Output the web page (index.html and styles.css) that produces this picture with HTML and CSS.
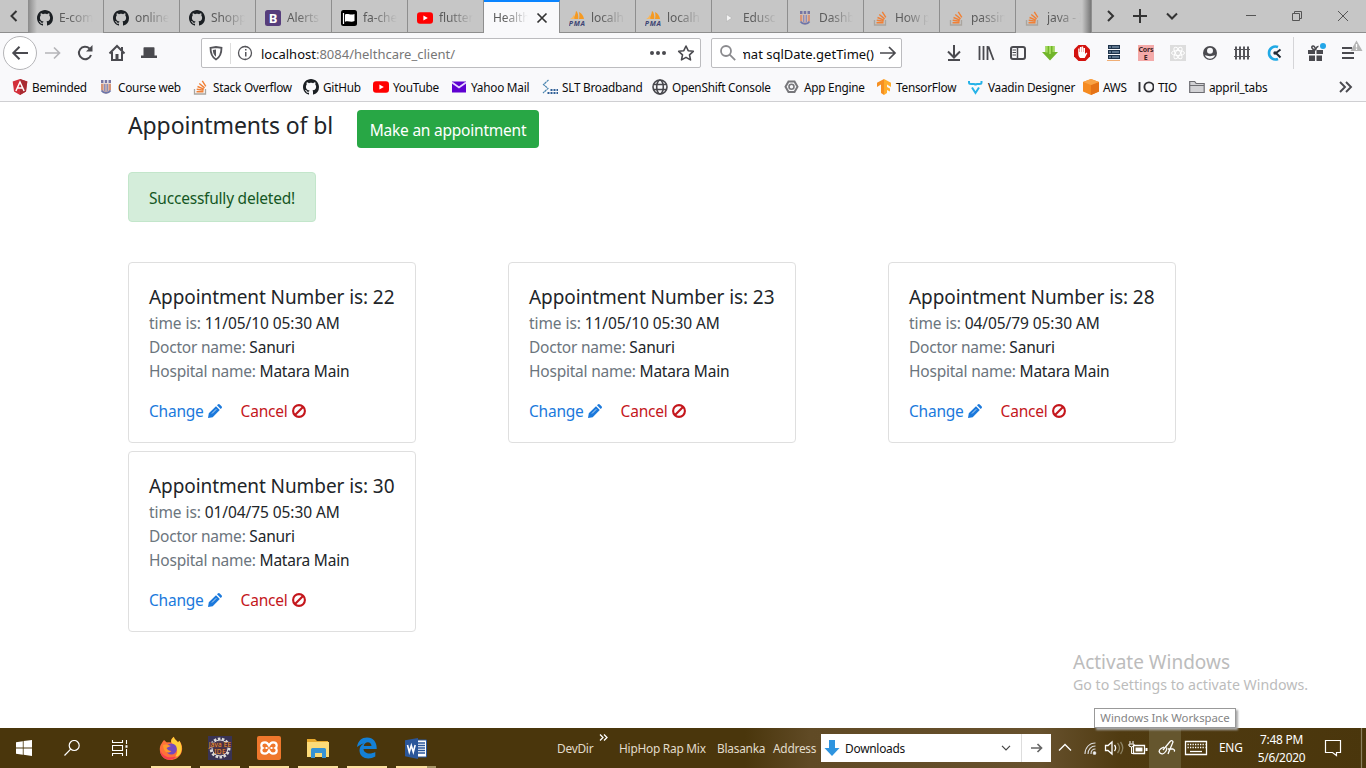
FILE: index.html
```html
<!DOCTYPE html>
<html lang="en">
<head>
<meta charset="utf-8">
<title>Healthcare</title>
<link rel="stylesheet" href="styles.css">
</head>
<body>
<svg class="defs" aria-hidden="true">
  <symbol id="github" viewBox="0 0 16 16"><path fill="#1b1f23" d="M8 0C3.58 0 0 3.58 0 8c0 3.54 2.29 6.53 5.47 7.59.4.07.55-.17.55-.38 0-.19-.01-.82-.01-1.49-2.01.37-2.53-.49-2.69-.94-.09-.23-.48-.94-.82-1.13-.28-.15-.68-.52-.01-.53.63-.01 1.08.58 1.23.82.72 1.21 1.87.87 2.33.66.07-.52.28-.87.51-1.07-1.78-.2-3.64-.89-3.64-3.95 0-.87.31-1.59.82-2.15-.08-.2-.36-1.02.08-2.12 0 0 .67-.21 2.2.82.64-.18 1.32-.27 2-.27s1.36.09 2 .27c1.53-1.04 2.2-.82 2.2-.82.44 1.1.16 1.92.08 2.12.51.56.82 1.27.82 2.15 0 3.07-1.87 3.75-3.65 3.95.29.25.54.73.54 1.48 0 1.07-.01 1.93-.01 2.2 0 .21.15.46.55.38A8.01 8.01 0 0 0 16 8c0-4.42-3.58-8-8-8z"/></symbol>
  <symbol id="youtube" viewBox="0 0 16 16"><rect y="2.3" width="16" height="11.4" rx="3" fill="#f00"/><path fill="#fff" d="M6.4 5.5v5L10.800 8z"/></symbol>
  <symbol id="so" viewBox="0 0 16 16"><path d="M1.500 10v5h11v-5" fill="none" stroke="#aaa59f" stroke-width="1.3"/><path d="M3.500 12.800h7M3.700 10.300l6.900 1M4.500 7.500l6.400 2.700M6.300 4.500l5.300 4.400M9.300 1.800l3.500 5.500" stroke="#f08036" stroke-width="1.400" fill="none"/></symbol>
  <symbol id="pma" viewBox="0 0 16 16"><path fill="#f59a22" d="M3 9C5 8 6.500 5 7 1c2 1 2.500 5 2.300 8zM10 9c.5-2 .5-5 0-7 3 1.500 4.500 4 5 7z"/><path fill="#f7b75e" d="M1 9c2-.6 3-2.400 4-4.500L5.500 9z"/><text x="-.2" y="15.600" font-size="7" font-weight="700" font-style="italic" fill="#3d4574" textLength="16">PMA</text></symbol>
  <symbol id="crest" viewBox="0 0 16 16"><path fill="#7775a2" d="M3 1h2.500v3H3zM6.700 1h2.500v3H6.700zM10.500 1H13v3h-2.500z"/><path fill="#d9b6a8" d="M3 4.500h10V11q-2 3-5 4-3-1-5-4z"/><path d="M4 5v6M12 5v6" stroke="#d58b68" stroke-width="1.500"/><path d="M6.700 5v7M9.300 5v7" stroke="#7f8cc0" stroke-width="1.200"/><path d="M3.500 11.500c2 3 7 3 9 0" stroke="#6c76aa" stroke-width="1.800" fill="none"/></symbol>
</svg>

<div class="tabs">
  <span class="scroll"><svg width="10" height="12" viewBox="0 0 10 12"><path d="M7.500 1L2.500 6l5 5" fill="none" stroke="#333" stroke-width="2"/></svg></span>
  <div class="tab first"><svg class="i16"><use href="#github"/></svg><span>E-com</span></div>
  <div class="tab"><svg class="i16"><use href="#github"/></svg><span>online</span></div>
  <div class="tab"><svg class="i16"><use href="#github"/></svg><span>Shopp</span></div>
  <div class="tab"><svg class="i16" viewBox="0 0 16 16"><rect width="16" height="16" rx="2.500" fill="#563d7c"/><text x="3.800" y="12.700" font-size="13" font-weight="700" fill="#fff">B</text></svg><span>Alerts</span></div>
  <div class="tab"><svg class="i16" viewBox="0 0 16 16"><rect width="16" height="16" rx="2.500"/><path d="M2.500 3v11" stroke="#fff" stroke-width="1.200"/><path fill="#fff" d="M4 4.500c3-1.500 5 1 9.500-.5v7c-4 1.800-6-1-9.500.7z"/></svg><span>fa-che</span></div>
  <div class="tab"><svg class="i16"><use href="#youtube"/></svg><span>flutter</span></div>
  <div class="tab active"><span>Health</span><svg width="12" height="12" viewBox="0 0 12 12"><path d="M1.500 1.500l9 9M10.500 1.500l-9 9" stroke="#333" stroke-width="1.700"/></svg></div>
  <div class="tab"><svg class="i16"><use href="#pma"/></svg><span>localh</span></div>
  <div class="tab"><svg class="i16"><use href="#pma"/></svg><span>localh</span></div>
  <div class="tab"><svg class="i16" viewBox="0 0 16 16"><path fill="#f4f4f4" stroke="#aaa" stroke-width=".5" d="M5.500 4.500L11 8l-5.500 3.500z"/></svg><span>Edusc</span></div>
  <div class="tab"><svg class="i16"><use href="#crest"/></svg><span>Dashb</span></div>
  <div class="tab"><svg class="i16"><use href="#so"/></svg><span>How p</span></div>
  <div class="tab"><svg class="i16"><use href="#so"/></svg><span>passin</span></div>
  <div class="tab last"><svg class="i16"><use href="#so"/></svg><span>java - I</span></div>
  <svg class="tabctl" width="270" height="32" viewBox="0 0 270 32" fill="none" stroke="#333" stroke-width="2"><path d="M12 11l5 5-5 5M37 16h14M44 9v14M71 13.500l5 5 5-5"/><g stroke="#555" stroke-width="1"><path d="M150 15.500h10M196.500 13.500h7v7h-7zM198.500 13.500v-2h7v7h-2M242 11l10 10M252 11l-10 10"/></g></svg>
</div>

<div class="nav">
  <span class="back"><svg width="18" height="16" viewBox="0 0 18 16" fill="none" stroke="#4a4a4f" stroke-width="2"><path d="M17 8H2.500M8.500 1.800L2.300 8l6.200 6.200"/></svg></span>
  <svg class="navicons" width="124" height="32" viewBox="0 0 124 32" fill="none" stroke="#4a4a4f" stroke-width="2">
    <path d="M8 16h14M17 10.500l5.500 5.500-5.500 5.500" stroke="#b5b5b9" stroke-width="1.700"/>
    <path d="M52.500 11.500A6.200 6.200 0 1 0 54 18"/><path d="M55.500 8v6.500H49z" fill="#4a4a4f" stroke="none"/>
    <path d="M72.500 16.500L80 9l7.500 7.500M75 15v8h10v-8"/><path d="M78.500 17h3v6h-3z" fill="#4a4a4f" stroke="none"/><path d="M84 10h2v4h-2z" fill="#4a4a4f" stroke="none"/>
    <path d="M106.500 11q0-.7.700-.7h9.600q.7 0 .7.700v7.500h2.500V21h-16v-2.500h2.500z" fill="#4a4a4f" stroke="none"/>
  </svg>
  <div class="url">
    <svg width="44" height="28" viewBox="0 0 44 28" fill="none" stroke="#55555a"><path d="M8.500 8.800L14 8l5.500.8c0 6-1.500 9.500-5.500 11.700-4-2.200-5.500-5.700-5.500-11.700z" stroke-width="1.800"/><path fill="#55555a" stroke="none" d="M14 10.500v7.300c-2-1.500-3-3.500-3.200-6.800z"/><path stroke="#ddd" d="M28.500 4v21"/><circle cx="43" cy="14" r="6.500" stroke-width="1.300"/></svg>
    <svg class="info" width="16" height="28" viewBox="0 0 16 28" fill="none" stroke="#55555a"><circle cx="0" cy="14" r="6.500" stroke-width="1.300"/><path d="M0 13v4.500M0 10v1.500" stroke-width="3"/></svg>
    <span class="addr"><b>localhost</b>:8084/helthcare_client/</span>
    <svg class="urlend" width="46" height="20" viewBox="0 0 46 20"><g fill="#4a4a4f"><circle cx="3" cy="10" r="2"/><circle cx="9" cy="10" r="2"/><circle cx="15" cy="10" r="2"/></g><path d="M37 3l2.200 4.700 5.100.6-3.800 3.500 1 5.100-4.500-2.500-4.500 2.500 1-5.100-3.800-3.500 5.100-.6z" fill="none" stroke="#4a4a4f" stroke-width="1.600" stroke-linejoin="round"/></svg>
  </div>
  <div class="search">
    <svg width="18" height="18" viewBox="0 0 18 18" fill="none" stroke="#8a8a8e" stroke-width="1.800"><circle cx="7" cy="7" r="5"/><path d="M10.700 10.700l5.500 5.500"/></svg>
    <span class="query"><span>mat sqlDate.getTime()</span></span>
    <svg width="18" height="18" viewBox="0 0 18 18" fill="none" stroke="#4a4a4f" stroke-width="1.700"><path d="M1 9h15M10 3l6 6-6 6"/></svg>
  </div>
  <div class="tools">
    <svg viewBox="0 0 32 32"><path d="M16 8v12M10 14.500l6 6 6-6M10 23h12" fill="none" stroke="#4a4a4f" stroke-width="2"/></svg>
    <svg viewBox="0 0 32 32"><path d="M9.500 9v14M13.500 9v14M17.500 9v14M18.500 9.500l5 13.500" fill="none" stroke="#4a4a4f" stroke-width="1.800"/></svg>
    <svg viewBox="0 0 32 32" fill="none" stroke="#4a4a4f"><rect x="9" y="10" width="14" height="12" rx="2" stroke-width="2"/><path d="M15.500 10v12" stroke-width="1.500"/><path d="M10.500 13h3.500M10.500 15.500h3.500M10.500 18h3.500"/></svg>
    <svg viewBox="0 0 32 32"><path fill="#72b52b" d="M11.500 9h9v6H24l-8 8.500L8 15h3.500z"/><path fill="#a3da5e" d="M11.500 9h2.200v6.500h-2.200zM15 9h2v8h-2zM18.500 9h2v6h-2z"/></svg>
    <svg viewBox="0 0 32 32"><path fill="#d3120e" d="M12.500 8h7l4.500 4.500v7L19.500 24h-7L8 19.500v-7z"/><path fill="#fff" d="M12.200 15v-3.500h1.300V15h.4v-5h1.500v5h.3v-5.500h1.500V15h.3v-4H19v6l1.300-1.600 1 .8-2.600 4.800h-4.500c-1.600-1-2-3-2-6z"/></svg>
    <svg viewBox="0 0 32 32"><path fill="#1f344b" d="M10 8h12v4H10zM10 13h12v4H10zM10 18h12v4H10z"/><path d="M11 10h2m1 0h7M11 15h2m1 0h7M11 20h2m1 0h7" stroke="#9eb7d0"/><path d="M9 23.500h13" stroke="#f0ae75"/></svg>
    <svg viewBox="0 0 32 32"><path fill="#f4aaa9" d="M8 8h16v16H8z"/><g font-size="7" font-weight="700" fill="#402325"><text x="8.500" y="15" textLength="15">Cors</text><text x="13.700" y="23">E</text></g></svg>
    <svg viewBox="0 0 32 32"><path fill="#ddd" d="M8 8h16v16H8z"/><g fill="none" stroke="#fff" stroke-width="1"><ellipse cx="16" cy="16" rx="6.500" ry="2.500"/><ellipse cx="16" cy="16" rx="6.500" ry="2.500" transform="rotate(60 16 16)"/><ellipse cx="16" cy="16" rx="6.500" ry="2.500" transform="rotate(120 16 16)"/></g></svg>
    <svg viewBox="0 0 32 32"><circle cx="16" cy="16" r="7" fill="#4a4a4f"/><circle cx="16" cy="13.800" r="3" fill="#f9f9fb"/><path d="M11 18c2.500 1.500 7.500 1.500 10 0-1 5-9 5-10 0z" fill="#f9f9fb"/></svg>
    <svg viewBox="0 0 32 32"><path d="M10 9.500v13M14 9.500v13M18 9.500v13M22 9.500v13" stroke="#55555a" stroke-width="2"/><path d="M8 12.500h16M8 19.500h16" stroke="#55555a" stroke-width="1.200"/></svg>
    <svg viewBox="0 0 32 32" fill="none"><path d="M20 10a6.500 6.500 0 1 0 0 12" stroke="#20a9e5" stroke-width="2.600"/><path d="M22.500 12.500L18 16l4.500 4.500" stroke="#222c36" stroke-width="2"/><circle cx="17" cy="16" r="1.700" fill="#222c36"/></svg>
    <svg class="gift" viewBox="0 0 52 32"><path d="M3.500 0v32" stroke="#d5d5d8"/><path fill="#4a4a4f" d="M18 13h7v4h-7zM26.500 13H33v4h-6.500zM19 18.500h6V24h-6zM26.500 18.500H32V24h-5.500z"/><path d="M25.500 13c-4 0-4.500-4-2.500-4s2.500 4 2.500 4 1-4 3-3.500" fill="none" stroke="#4a4a4f" stroke-width="1.600"/><circle cx="33" cy="9" r="3" fill="#24a6e8"/></svg>
    <svg class="menu" viewBox="0 0 24 32"><path d="M0 11h10M0 16h12M0 21h12" stroke="#4a4a4f" stroke-width="2"/><path fill="#b5b5b5" d="M14.500 3.500L20.500 14h-12z"/><path d="M14.500 7v3.500M14.500 11.500V13" stroke="#fff" stroke-width="1.300"/></svg>
  </div>
</div>

<div class="bookmarks">
  <div><svg viewBox="0 0 16 16"><path fill="#d32f3a" d="M8 0l7.300 2.600L14 12.500 8 16l-6-3.500L.7 2.600z"/><path fill="#a92b32" d="M8 0l7.300 2.600L14 12.500 8 16z"/><path d="M3.900 12L8 3l4.100 9M5.500 9h5" fill="none" stroke="#fff" stroke-width="1.500"/></svg><span>Beminded</span></div>
  <div><svg><use href="#crest"/></svg><span>Course web</span></div>
  <div><svg><use href="#so"/></svg><span>Stack Overflow</span></div>
  <div><svg><use href="#github"/></svg><span>GitHub</span></div>
  <div><svg><use href="#youtube"/></svg><span>YouTube</span></div>
  <div><svg viewBox="0 0 16 16"><path fill="#5f01d1" d="M1 2.500h14v11H1z"/><path d="M1 3.500l7 5 7-5" stroke="#e8d9ff" stroke-width="1.800" fill="none"/></svg><span>Yahoo Mail</span></div>
  <div><svg viewBox="0 0 16 16"><path d="M6.500 1L1.500 5.500l4.500 4-5 4.500" fill="none" stroke="#4c86b0" stroke-width="1.200" stroke-dasharray="2.500 .5"/><path d="M5.500 14h2M8.500 14h2M11.500 14h2M14.500 14H16M8.500 11h2M11.500 11h2M14.500 11H16" stroke="#2f5f96" stroke-width="1.800"/></svg><span>SLT Broadband</span></div>
  <div><svg viewBox="0 0 16 16" fill="none" stroke="#48484d" stroke-width="1.600"><circle cx="8" cy="8" r="7"/><ellipse cx="8" cy="8" rx="3.300" ry="7"/><path d="M1.500 5.500h13M1.500 10.500h13"/></svg><span>OpenShift Console</span></div>
  <div><svg viewBox="0 0 16 16" fill="none" stroke="#77777b"><path d="M4.500 2.500h6l3 5.300-3 5.300h-6l-3-5.300z" stroke-width="2"/><circle cx="7.500" cy="7.800" r="2.500" stroke-width="1.600"/></svg><span>App Engine</span></div>
  <div><svg viewBox="0 0 16 16"><path fill="#f69022" d="M1 3.800L8 0v16l-3-2V5.500L1 8z"/><path fill="#ffad2d" d="M8 0l7 3.800V8l-4-2.500V8l3 1.500v3L11 11v3l-3 2z"/></svg><span>TensorFlow</span></div>
  <div><svg viewBox="0 0 16 16" fill="none" stroke="#27b3e8" stroke-width="2"><path d="M1 2v1.500Q1 5 3 5h3q1.500 0 1.500 1.500Q7.500 5 9 5h2.500q2 0 2-1.500V2M4 8.500L7.500 14 11 8.500"/></svg><span>Vaadin Designer</span></div>
  <div><svg viewBox="0 0 16 16"><path fill="#f58a20" d="M8 0l8 3v9.500L8 16l-8-3.500V3z"/><path fill="#e57317" d="M8 6l8-3v9.500L8 16z"/><path fill="#f9a346" d="M8 0l8 3-8 3-8-3z"/></svg><span>AWS</span></div>
  <div><svg viewBox="0 0 16 16" fill="none" stroke="#303034" stroke-width="1.900"><path d="M1.500 3v10"/><circle cx="11" cy="8" r="4.600"/></svg><span>TIO</span></div>
  <div><svg viewBox="0 0 16 16"><path d="M.7 13.500v-11h5l1.500 2h8v9z" fill="#d2d2d5" stroke="#6d6d72" stroke-width="1.200"/><path d="M1 6.500h14" stroke="#6d6d72"/></svg><span>appril_tabs</span></div>
  <svg class="more" viewBox="0 0 16 16" fill="none" stroke="#4a4a4f" stroke-width="1.900"><path d="M2 3l5 5-5 5M8 3l5 5-5 5"/></svg>
</div>

<main>
  <header class="head"><h4>Appointments of bl</h4><a class="btn">Make an appointment</a></header>
  <div class="alert">Successfully deleted!</div>
  <div class="cards" id="cards"></div>
  <div class="watermark"><div class="w1">Activate Windows</div><div class="w2">Go to Settings to activate Windows.</div></div>
  <div class="tip">Windows Ink Workspace</div>
</main>

<footer class="taskbar">
  <div class="app"><svg viewBox="0 0 16 16"><path fill="#fff" d="M0 2.200l6.800-1v6.400H0zM7.600 1.100L16 0v7.600H7.600zM0 8.400h6.800v6.400l-6.800-1zM7.600 8.400H16V16l-8.400-1.200z"/></svg></div>
  <div class="app"><svg viewBox="0 0 16 16" fill="none" stroke="#fff" stroke-width="1.200"><circle cx="10.200" cy="5.500" r="5"/><path d="M6.700 9.200L.5 15.500"/></svg></div>
  <div class="app"><svg viewBox="0 0 16 16" fill="none" stroke="#fff" stroke-width="1.100"><path d="M.5 0v2.500h10V0M.5 5.500h10v5H.5zM.5 16v-2.500h10V16M14.500 0v4M14.500 9v7"/><path d="M13.500 6.500h2" stroke-width="2.500"/></svg></div>
  <div class="app open ff"><svg class="big" viewBox="0 0 24 24"><path fill="#ff7139" d="M5 4c1.500 1 2 2 3 2.500 1-.3 3 0 4 0C11.500 4 13 2 15 .8c0 2.700 3 3.700 4 5.700l1.300-1.800C23 8 24 12 22.500 16.500 20.500 21.500 16 24 11.500 24 5 24 .8 19 .8 13.500.8 9 3 7 5 4z"/><path fill="#ffcf36" d="M15 .8c0 2.700 3 3.700 4 5.700l1.300-1.800c3 4.800 3 9.500.8 13.500-1.500 2-4 3-5.500 3 4-4 3-9-.5-12-3-2-4.500-5-.1-8.400z"/><circle cx="12.300" cy="13" r="5.500" fill="#7449bd"/><path fill="#ff9b2c" d="M4 9c2-1 5-.5 8 1-2 .5-3 1.500-4.500 2 1 2 2.500 3 5 3-4 3.500-8 1-8.500-6z"/><path fill="#f73f50" d="M1 14c3 7 10 9 17 6-3 3-5 4-8 3.800C5 23.500 1 19 1 14z"/></svg></div>
  <div class="app open"><svg class="big" viewBox="0 0 24 24"><path fill="#393354" d="M0 0h24v24H0z"/><circle cx="12" cy="12" r="9" fill="none" stroke="#dedbd7" stroke-width="3" stroke-dasharray="2.500 1.500"/><circle cx="12" cy="12" r="8" fill="#4d3d56" stroke="#ddd"/><path fill="#4a3040" d="M1 6.500h22v5H1zM6 12h12v5H6z"/><g font-size="6.500" fill="#fb982f"><text x=".8" y="11.300" textLength="22">Java EE</text><text x="6.300" y="17.500" textLength="11">IDE</text></g></svg></div>
  <div class="app open"><svg class="big" viewBox="0 0 24 24"><rect width="24" height="24" rx="2" fill="#ef772c"/><path d="M12 9.500Q10.500 6.300 8 6.300 4.300 6.300 4.300 9.500q0 1.800 1.200 2.500-1.200.7-1.200 2.500 0 3.200 3.700 3.200 2.500 0 4-3.200 1.500 3.200 4 3.200 3.700 0 3.700-3.200 0-1.800-1.200-2.500 1.200-.7 1.200-2.500 0-3.200-3.700-3.200-2.500 0-4 3.200zM8.500 12h2M13.500 12h2" fill="none" stroke="#fff" stroke-width="2.200"/></svg></div>
  <div class="app open"><svg class="big" viewBox="0 0 24 24"><path fill="#e8a92d" d="M1 3h8l2 2h11v5H1z"/><path fill="#fddb78" d="M1 6h22v15H1z"/><path fill="#3793d4" d="M5 13.500q0-1.500 1.500-1.500h12q1.500 0 1.500 1.500V22h-4v-5H9v5H5z"/></svg></div>
  <div class="app open"><svg class="big" viewBox="0 0 24 24"><path fill="#1480d5" d="M2 11C3 4.500 7 1.500 12 1.500c6.500 0 10 5 9.700 11.500H8.500c.3 4.500 6.500 5.800 11.800 3v4.500c-6.500 4-15.600 2-15.800-6C4.400 11 6.500 8.500 9 7.500 6 8 4 9.500 2 11zM8.700 10h7.800c0-4.700-6.700-5.300-7.800 0z"/></svg></div>
  <div class="app open word"><svg class="big" viewBox="0 0 24 24"><path fill="#fff" stroke="#2b579a" d="M12 4h10.500v17H12z"/><path d="M14 7h7M14 9.500h7M14 12h7M14 14.500h7M14 17h7" stroke="#2b579a" stroke-width="1.300"/><path fill="#2b579a" d="M1 4.300L14 2v21L1 20.300z"/><path d="M3.500 9l1.800 7 2-6.500 2 6.500 1.900-7" fill="none" stroke="#fff" stroke-width="1.600"/></svg></div>
  <div class="links"><span>DevDir</span><svg width="9" height="7" viewBox="0 0 9 7" fill="none" stroke="#fff" stroke-width="1.300"><path d="M1 .5l3 3-3 3M5 .5l3 3-3 3"/></svg><span>HipHop Rap Mix</span><span>Blasanka</span><span>Address</span></div>
  <div class="download"><svg width="16" height="16" viewBox="0 0 16 16"><path fill="#2e94df" d="M5 0h6v8h4.500L8 16 .5 8H5z"/></svg><span>Downloads</span><svg class="chev" width="10" height="6" viewBox="0 0 10 6" fill="none" stroke="#444" stroke-width="1.200"><path d="M1 .8l4 4 4-4"/></svg><span class="go"><svg width="12" height="10" viewBox="0 0 12 10" fill="none" stroke="#666" stroke-width="1.700"><path d="M0 5h10M6.500 1l4 4-4 4"/></svg></span></div>
  <svg class="tray" width="162" height="40" viewBox="0 0 162 40" fill="none" stroke="#fff" stroke-width="1.300">
    <path fill="#65562e" stroke="none" d="M95 0h32v40H95z"/>
    <path d="M5 22.500l6-6 6 6"/>
    <g stroke="#ddd" stroke-width="1.100"><path d="M31 26c0-6 4-11 10.500-11M34 26c0-4.500 3-8 7.500-8M37 26c0-3 1.500-5 4.500-5"/><circle cx="40.500" cy="25" r="1.300" fill="#fff"/></g>
    <path d="M51.500 17.500H54l4-3.500v12l-4-3.500h-2.500z"/><path d="M60.500 17c1.500 2 1.500 4 0 6"/><path d="M63.500 15c2.500 3 2.500 7 0 10M66.500 14c3 4 3 8 0 12" stroke="#8c8262"/>
    <path d="M79.500 17.500h11v8h-11z"/><path fill="#fff" stroke="none" d="M81.500 19.500h7v4h-7zM91.500 20h2v3h-2z"/><path d="M76 13v2.500M79 13v2.500M75 16h5v2q-2.500 2-5 0zM77.500 19v6.500h2" stroke-width="1"/>
    <path d="M110 19q-7 3-4 6 3 2.500 6-2 1.500-2 .5-3.500M109 22l7.500-9q2-1 2.500 1l-5 12M114 21h5q2.500 1 1 2.500M114 26l1.500-4" stroke-width="1.300"/>
    <path d="M131.500 13.500h21v13h-21z"/><path d="M133.500 16.500h18M133.500 19.500h18" stroke-dasharray="1.300 1.200"/><path d="M136 23.500h12"/>
  </svg>
  <span class="lang">ENG</span>
  <div class="clock"><div>7:48 PM</div><div>5/6/2020</div></div>
  <svg class="notes" width="62" height="40" viewBox="0 0 62 40" fill="none" stroke="#fff" stroke-width="1.200"><path d="M21.500 12.500h15v12h-4v3l-4-3h-7z"/><path d="M57.500 0v40" stroke="#8b8060"/></svg>
</footer>
<script src="cards.js"></script>
</body>
</html>
```

FILE: styles.css
```css
* { box-sizing: border-box; }
body { margin: 0; width: 1366px; height: 768px; overflow: hidden; display: flex; flex-direction: column; background: #fff; font-family: "Noto Sans", sans-serif; }
svg { display: block; flex: none; }
.defs { position: absolute; width: 0; height: 0; }
.i16 { width: 16px; height: 16px; }

.tabs { height: 33px; display: flex; background: #c6c6c6; border-bottom: 1px solid #8e8e8e; flex: none; }
.scroll { width: 28px; display: flex; align-items: center; justify-content: center; }
.tab { width: 76px; height: 33px; padding: 2px 9px 0 9px; border-right: 1px solid #8e8e8e; display: flex; align-items: center; gap: 6px; overflow: hidden; font-size: 12px; letter-spacing: -0.1px; color: #5c5c5c; flex: none; }
.tab span { width: 34px; overflow: hidden; white-space: nowrap; flex: none; mask-image: linear-gradient(90deg, #000 30%, transparent); }
.tab.first { background: linear-gradient(90deg, #8a8a8a, #c6c6c6 9px); }
.tab.last { background: linear-gradient(270deg, #777, #c6c6c6 9px); }
.tab.active { background: #f9f9fb; border-top: 2px solid #0a84ff; padding: 0 9px; gap: 8px; }
.tab.active span { width: 35px; }
.tabctl { margin-left: 4px; }

.nav { height: 40px; flex: none; background: #f9f9fb; display: flex; align-items: center; }
.back { width: 34px; height: 34px; margin-left: 3px; border: 1px solid #b5b5b8; border-radius: 50%; background: #fff; display: flex; align-items: center; justify-content: center; }
.url { margin-left: 40px; width: 500px; height: 30px; border: 1px solid #bcbcbf; border-radius: 2px; background: #fff; display: flex; align-items: center; }
.info { margin-left: -1px; }
.addr { font-size: 13px; color: #777; white-space: nowrap; padding-top: 2px; }
.addr b { font-weight: 400; color: #0c0c0d; }
.urlend { margin-left: auto; margin-right: 5px; }
.search { margin-left: 10px; width: 191px; height: 30px; border: 1px solid #bcbcbf; border-radius: 2px; background: #fff; display: flex; align-items: center; padding-left: 7px; }
.query { margin: 2px 5px 0 6px; width: 131px; overflow: hidden; font-size: 13px; white-space: nowrap; display: flex; justify-content: flex-end; color: #0c0c0d; }
.tools { margin-left: 36px; display: flex; }
.tools svg { width: 32px; height: 32px; }
.tools .gift { width: 52px; }
.tools .menu { width: 24px; }

.bookmarks { height: 29px; flex: none; background: #f9f9fb; border-bottom: 1px solid #cfcfd2; padding-left: 12px; display: grid; grid-template-columns: 86px 95px 110px 70px 78px 91px 110px 132px 92px 92px 115px 55px 51px 149px 16px; align-items: center; font-size: 11.8px; letter-spacing: -0.25px; color: #0c0c0d; white-space: nowrap; }
.bookmarks div { display: flex; align-items: center; gap: 4px; }
.bookmarks svg { width: 16px; height: 16px; }

main { flex: 1; position: relative; padding: 8px 128px 0; color: #212529; font-size: 15.5px; letter-spacing: -0.22px; }
.head { display: flex; height: 38px; }
h4 { margin: 0; width: 229px; font-size: 23px; letter-spacing: -0.12px; line-height: 30px; font-weight: 400; white-space: nowrap; }
.btn { width: 182px; height: 38px; border-radius: 4px; background: #28a745; color: #fff; text-align: center; line-height: 40px; white-space: nowrap; }
.alert { margin-top: 24px; width: 188px; height: 50px; border: 1px solid #c3e6cb; border-radius: 4px; background: #d4edda; color: #155724; line-height: 51px; text-align: center; white-space: nowrap; }
.cards { margin-top: 40px; display: grid; grid-template-columns: repeat(3, 288px); column-gap: 92px; row-gap: 8px; }
.card { height: 181px; border: 1px solid #dfdfdf; border-radius: 4px; padding: 22px 20px 0; white-space: nowrap; line-height: 24px; }
.card h5 { margin: 0 0 2px; font-size: 19px; letter-spacing: -0.08px; font-weight: 400; line-height: 24px; }
.card em { font-style: normal; color: #6c757d; }
.card .time { letter-spacing: -0.08px; }
.actions { margin-top: 16px; display: flex; gap: 19px; }
.actions a { display: flex; align-items: center; gap: 4px; color: #1b79dc; }
.actions .cancel { color: #c4161c; }
.watermark { position: absolute; left: 1073px; top: 547px; color: #bcbcbc; white-space: nowrap; letter-spacing: 0; }
.w1 { font-size: 19px; line-height: 26px; }
.w2 { font-size: 14.2px; line-height: 20px; }
.tip { position: absolute; left: 1094px; top: 606px; width: 142px; height: 20px; border: 1px solid #999; background: #fff; box-shadow: 2px 2px 2px #aaa; font-size: 11.4px; letter-spacing: -0.05px; line-height: 18px; text-align: center; color: #848484; white-space: nowrap; }

.taskbar { height: 40px; flex: none; display: flex; background: linear-gradient(90deg, #4a360c 0, #4a360c 745px, #604a25 810px, #67512d 1040px, #503b11 1120px, #4a360c 1366px); color: #fff; font-size: 11.9px; letter-spacing: -0.25px; white-space: nowrap; }
.taskbar > * { flex: none; }
.app { width: 48px; display: flex; align-items: center; justify-content: center; }
.app svg { width: 16px; height: 16px; }
.app .big { width: 24px; height: 24px; }
.app.open { width: 40px; margin-left: 9px; border-bottom: 2px solid #fce19f; padding-top: 2px; }
.app.ff { margin-left: 7px; }
.word { border-image: linear-gradient(90deg, #fce19f 77%, #a69566 77%) 1; }
.links { margin-left: 121px; width: 264px; display: grid; grid-template-columns: 42px 20px 98px 56px 48px; align-items: center; color: #e2dccb; }
.links svg { margin-bottom: 21px; }
.download { width: 230px; height: 34px; border-bottom: 0; margin-top: 6px; height: 28px; background: #fff; color: #111; display: flex; align-items: center; padding-left: 3px; gap: 5px; }
.chev { margin-left: auto; margin-right: 5px; }
.go { width: 30px; height: 28px; border-left: 1px solid #ddd; display: flex; align-items: center; justify-content: center; }
.tray { margin-left: 3px; }
.lang { width: 43px; line-height: 39px; padding-left: 3px; }
.clock { width: 45px; line-height: 18px; padding-top: 2px; display: flex; flex-direction: column; align-items: center; }
```

FILE: cards.js
```js
const appointments = [
  [22, "11/05/10 05:30 AM"],
  [23, "11/05/10 05:30 AM"],
  [28, "04/05/79 05:30 AM"],
  [30, "01/04/75 05:30 AM"]
];
document.getElementById("cards").innerHTML = appointments.map(([id, time]) => `
  <section class="card">
    <h5>Appointment Number is: ${id}</h5>
    <div class="time"><em>time is:</em> ${time}</div>
    <div class="doctor"><em>Doctor name:</em> Sanuri</div>
    <div class="hospital"><em>Hospital name:</em> Matara Main</div>
    <div class="actions">
      <a><span>Change</span><svg width="14" height="14" viewBox="0 0 14 14"><path fill="#1b79dc" d="M0 14l.8-4.700L8 2.200 11.800 6l-7.100 7.200zM9 1.300l.8-.8q1-1 2 0l1.700 1.700q1 1 0 2l-.8.8z"/><path d="M4 9.500L8.300 5.200" stroke="#fff" stroke-width=".7"/></svg></a>
      <a class="cancel"><span>Cancel</span><svg width="14" height="14" viewBox="0 0 14 14" fill="none" stroke="#c4161c" stroke-width="2.100"><circle cx="7" cy="7" r="5.900"/><path d="M3 11l8-8"/></svg></a>
    </div>
  </section>`).join("");
```
